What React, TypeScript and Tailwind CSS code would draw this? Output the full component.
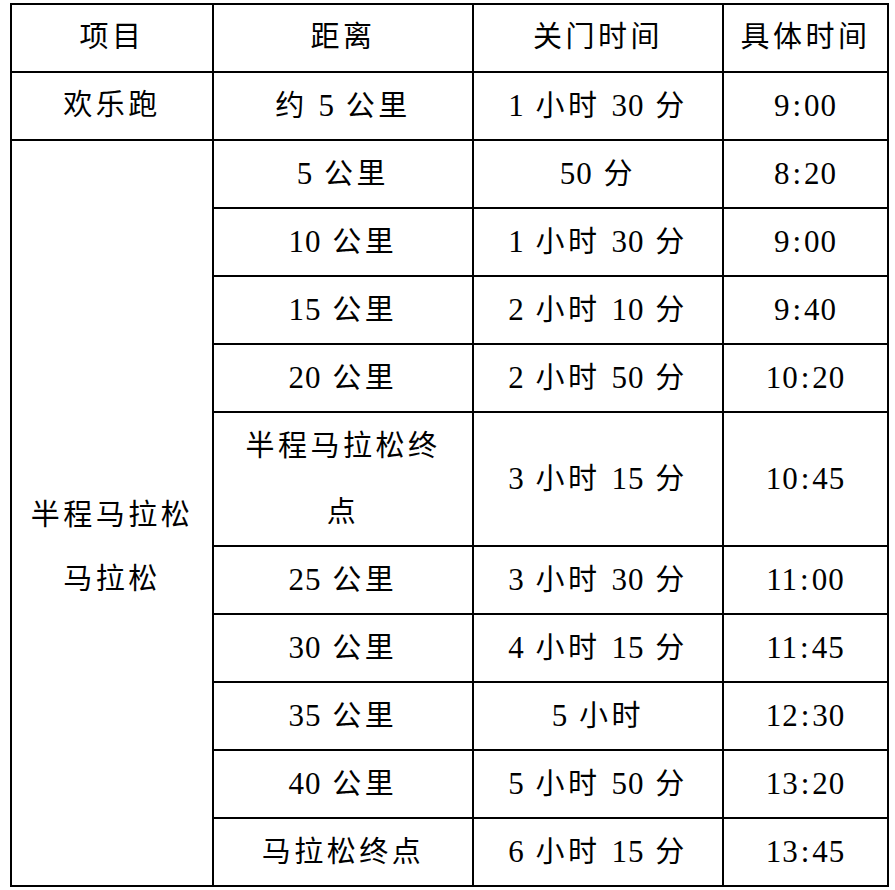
import React from "react";

type Row = { dist: string; close: string; time: string; tall?: boolean };

const rows: Row[] = [
  { dist: "5 公里", close: "50 分", time: "8:20" },
  { dist: "10 公里", close: "1 小时 30 分", time: "9:00" },
  { dist: "15 公里", close: "2 小时 10 分", time: "9:40" },
  { dist: "20 公里", close: "2 小时 50 分", time: "10:20" },
  { dist: "半程马拉松终\n点", close: "3 小时 15 分", time: "10:45", tall: true },
  { dist: "25 公里", close: "3 小时 30 分", time: "11:00" },
  { dist: "30 公里", close: "4 小时 15 分", time: "11:45" },
  { dist: "35 公里", close: "5 小时", time: "12:30" },
  { dist: "40 公里", close: "5 小时 50 分", time: "13:20" },
  { dist: "马拉松终点", close: "6 小时 15 分", time: "13:45" },
];

const cell = "border-2 border-black text-center align-middle p-0";

// 数字用大一点的衬线字，中文保留字距
const Txt = ({ s }: { s: string }) => (
  <>
    {s.split(/([0-9:]+|\n)/).map((part, i) =>
      part === "\n" ? (
        <br key={i} />
      ) : /^[0-9:]+$/.test(part) ? (
        <span key={i} className="text-[31px] tracking-[1px]">
          {part.split(":").map((d, j) => (
            <React.Fragment key={j}>
              {j > 0 && <span className="mx-[2px]">:</span>}
              {d}
            </React.Fragment>
          ))}
        </span>
      ) : (
        <React.Fragment key={i}>{part}</React.Fragment>
      ),
    )}
  </>
);

export default function App() {
  return (
    <div
      className="bg-white w-[895px] h-[890px] pt-[3px] pl-[10px] text-black text-[29px] tracking-[3.5px]"
      style={{ fontFamily: '"Liberation Serif", "Noto Sans CJK SC", serif' }}
    >
      <table className="border-collapse table-fixed w-[877px]">
        <colgroup>
          <col className="w-[202px]" />
          <col className="w-[260px]" />
          <col className="w-[250px]" />
          <col className="w-[165px]" />
        </colgroup>
        <tbody>
          <tr className="h-[68px]">
            <td className={cell}>项目</td>
            <td className={cell}>距离</td>
            <td className={cell}>关门时间</td>
            <td className={cell}>具体时间</td>
          </tr>
          <tr className="h-[68px]">
            <td className={cell}>欢乐跑</td>
            <td className={cell}>
              <Txt s="约 5 公里" />
            </td>
            <td className={cell}>
              <Txt s="1 小时 30 分" />
            </td>
            <td className={cell}>
              <Txt s="9:00" />
            </td>
          </tr>
          {rows.map((r, i) => (
            <tr key={i} className={r.tall ? "h-[134px]" : "h-[68px]"}>
              {i === 0 && (
                <td className={cell} rowSpan={rows.length}>
                  <div className="pt-[68px] leading-[64px]">
                    半程马拉松
                    <br />
                    马拉松
                  </div>
                </td>
              )}
              <td className={cell}>
                <div className={r.tall ? "leading-[66px]" : "leading-[40px]"}>
                  <Txt s={r.dist} />
                </div>
              </td>
              <td className={cell}>
                <div className="leading-[40px]">
                  <Txt s={r.close} />
                </div>
              </td>
              <td className={cell}>
                <div className="leading-[40px]">
                  <Txt s={r.time} />
                </div>
              </td>
            </tr>
          ))}
        </tbody>
      </table>
    </div>
  );
}
